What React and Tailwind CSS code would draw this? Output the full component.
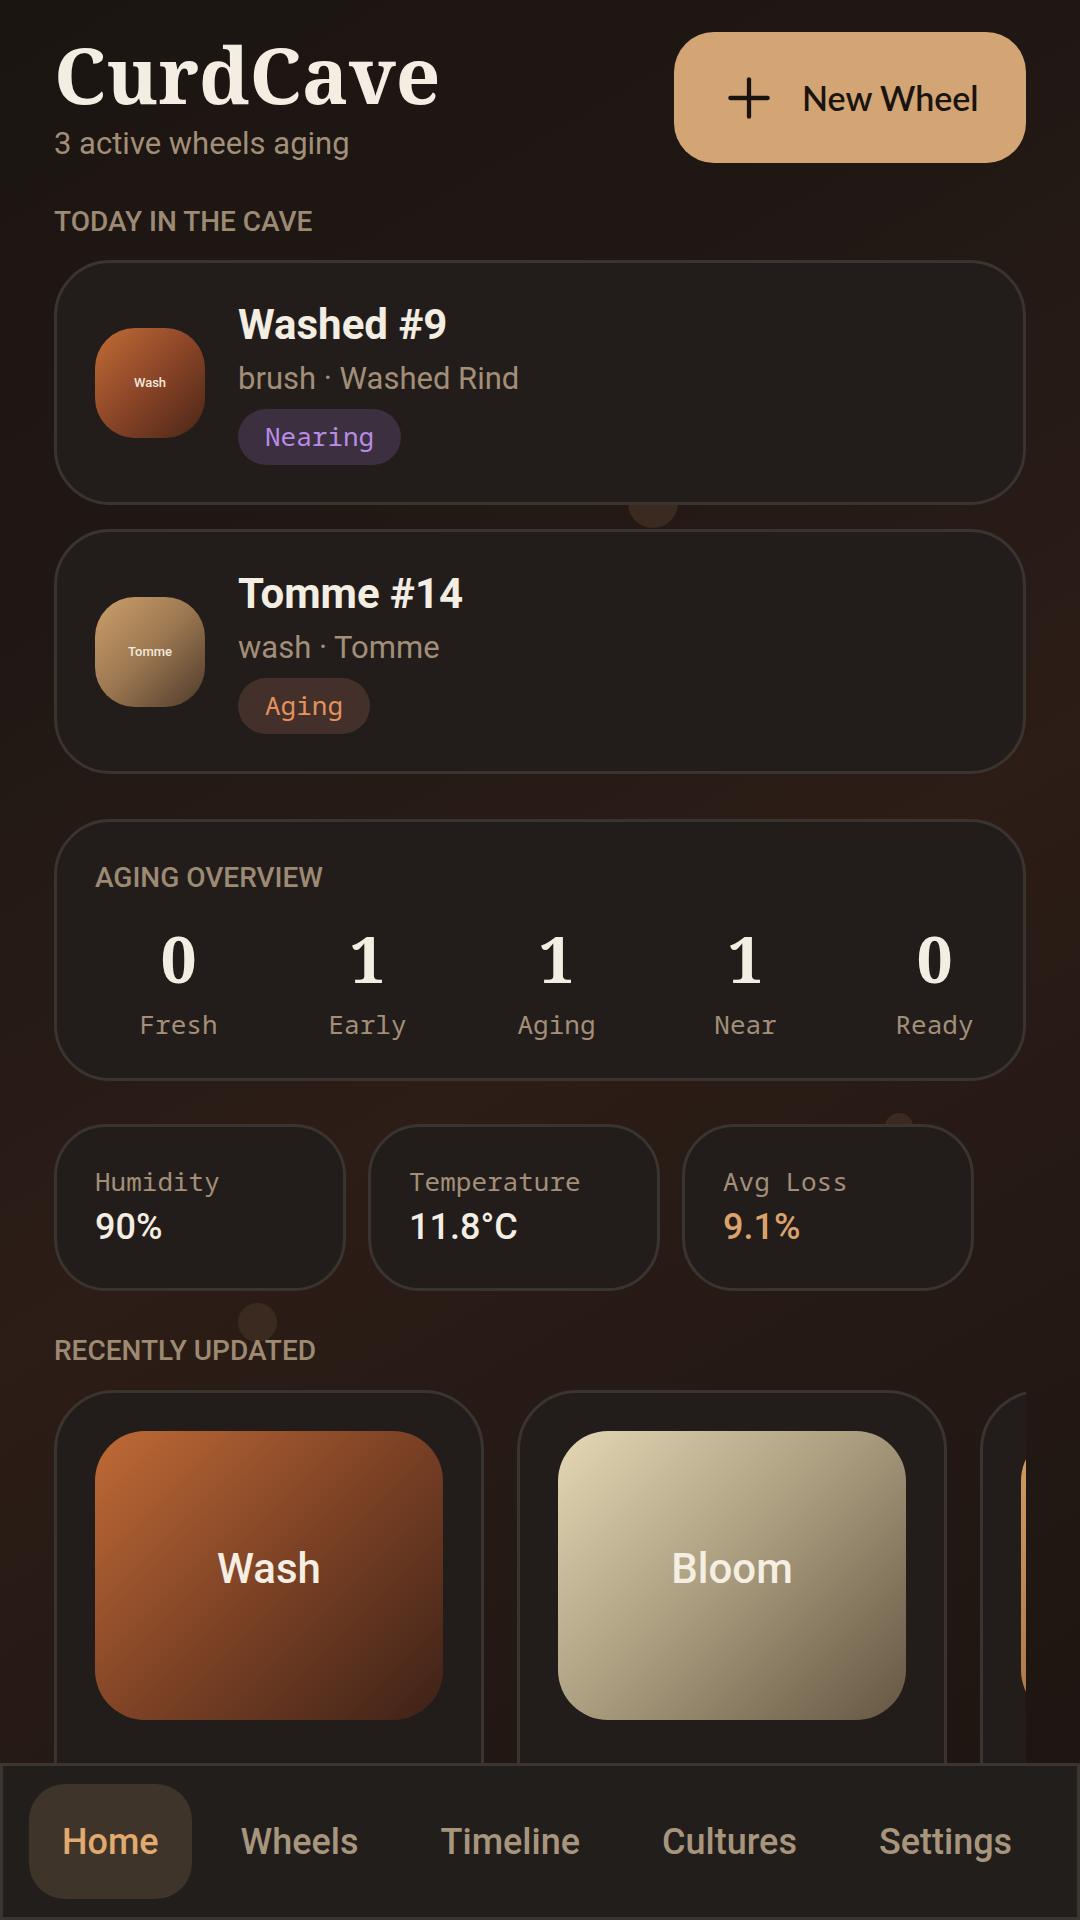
import { Plus } from "lucide-react";

const todayWheels = [
  {
    name: "Washed #9",
    meta: "brush · Washed Rind",
    tag: "Wash",
    status: "Nearing",
    swatch: "bg-[linear-gradient(135deg,#c26c37_0%,#8a4527_50%,#4a2517_100%)]",
    badge: "bg-[#3b2f40] text-[#b98be4]",
  },
  {
    name: "Tomme #14",
    meta: "wash · Tomme",
    tag: "Tomme",
    status: "Aging",
    swatch: "bg-[linear-gradient(135deg,#cda06c_0%,#9a7650_50%,#4d3a2a_100%)]",
    badge: "bg-[#43302a] text-[#e4925a]",
  },
];

const overview = [
  { label: "Fresh", count: 0 },
  { label: "Early", count: 1 },
  { label: "Aging", count: 1 },
  { label: "Near", count: 1 },
  { label: "Ready", count: 0 },
];

const stats = [
  { label: "Humidity", value: "90%", accent: false },
  { label: "Temperature", value: "11.8°C", accent: false },
  { label: "Avg Loss", value: "9.1%", accent: true },
];

const recent = [
  {
    tag: "Wash",
    name: "Washed #9",
    meta: "Day 41 · brush",
    swatch: "bg-[linear-gradient(135deg,#c06a36_0%,#7d4225_50%,#3d2117_100%)]",
  },
  {
    tag: "Bloom",
    name: "Bloomy #3",
    meta: "Day 12 · flip",
    swatch: "bg-[linear-gradient(135deg,#e4d8b6_0%,#a89a7c_50%,#645642_100%)]",
  },
  {
    tag: "Tomme",
    name: "Tomme #14",
    meta: "Day 63 · wash",
    swatch: "bg-[linear-gradient(135deg,#d29c63_0%,#a87446_50%,#5e4029_100%)]",
  },
];

const navItems = ["Home", "Wheels", "Timeline", "Cultures", "Settings"];

const SectionLabel = ({ children }) => (
  <h2 className="text-[28px] leading-[32px] font-medium uppercase text-[#9d8a73]">
    {children}
  </h2>
);

const App = () => {
  return (
    <div className="relative min-h-screen overflow-hidden bg-[linear-gradient(150deg,#1b1512_0%,#1f1714_22%,#2c1d16_50%,#231813_72%,#1a1411_100%)] font-['Roboto',sans-serif] text-[#f3ede2]">
      {/* spores drifting behind the cards */}
      <div className="absolute left-[628px] top-[478px] h-[50px] w-[50px] rounded-full bg-[#3b2a1f]"></div>
      <div className="absolute left-[885px] top-[1113px] h-[28px] w-[28px] rounded-full bg-[#3b2a1f]"></div>
      <div className="absolute left-[238px] top-[1303px] h-[39px] w-[39px] rounded-full bg-[#3b2a1f]"></div>

      <div className="relative px-[54px] pt-[32px] pb-[200px]">
        <header className="flex items-start justify-between">
          <div className="pt-[3px]">
            <h1 className="font-['Noto_Serif','DejaVu_Serif',serif] text-[78px] leading-[78px] font-bold text-[#f3ede2]">
              CurdCave
            </h1>
            <p className="mt-[13px] text-[31px] leading-[36px] text-[#a38f78]">
              3 active wheels aging
            </p>
          </div>
          <button className="flex h-[131px] w-[352px] items-center gap-[21px] rounded-[40px] bg-[#d3a474] pl-[43px] font-['Lato',sans-serif] text-[34px] font-semibold text-[#1a1410]">
            <Plus size={64} strokeWidth={1.6} />
            New Wheel
          </button>
        </header>

        <div className="mt-[43px]">
          <SectionLabel>Today in the cave</SectionLabel>
        </div>

        <div className="mt-[22px] flex flex-col gap-[24px]">
          {todayWheels.map((w) => (
            <div
              key={w.name}
              className="flex h-[245px] items-center gap-[33px] rounded-[56px] border-[3px] border-[#3a3430] bg-[#221d1b] px-[38px]"
            >
              <div
                className={`flex h-[110px] w-[110px] shrink-0 items-center justify-center rounded-[40px] ${w.swatch}`}
              >
                <span className="text-[13px] font-medium text-[#f3e9dc]">{w.tag}</span>
              </div>
              <div className="flex flex-col items-start">
                <div className="text-[42px] leading-[48px] font-bold text-[#f3ede2]">{w.name}</div>
                <div className="mt-[12px] text-[31px] leading-[36px] text-[#a38f78]">{w.meta}</div>
                <span
                  className={`mt-[12px] flex h-[56px] items-center rounded-full px-[27px] font-['Noto_Sans_Mono','DejaVu_Sans_Mono',monospace] text-[26px] ${w.badge}`}
                >
                  {w.status}
                </span>
              </div>
            </div>
          ))}
        </div>

        <div className="mt-[45px] h-[262px] rounded-[56px] border-[3px] border-[#3a3430] bg-[#221d1b] px-[38px] pt-[40px]">
          <SectionLabel>Aging overview</SectionLabel>
          <div className="ml-[-11px] mt-[33px] grid w-[945px] grid-cols-5">
            {overview.map((o) => (
              <div key={o.label} className="flex flex-col items-center">
                <span className="font-['Noto_Serif','DejaVu_Serif',serif] text-[64px] leading-[64px] font-bold text-[#f3ede2]">
                  {o.count}
                </span>
                <span className="mt-[17px] font-['Noto_Sans_Mono','DejaVu_Sans_Mono',monospace] text-[26px] leading-[32px] text-[#a38f78]">
                  {o.label}
                </span>
              </div>
            ))}
          </div>
        </div>

        <div className="mt-[43px] flex gap-[22px]">
          {stats.map((s) => (
            <div
              key={s.label}
              className="h-[167px] w-[292px] shrink-0 rounded-[52px] border-[3px] border-[#3a3430] bg-[#221d1b] px-[38px] pt-[38px]"
            >
              <div className="font-['Noto_Sans_Mono','DejaVu_Sans_Mono',monospace] text-[26px] leading-[32px] text-[#a38f78]">
                {s.label}
              </div>
              <div
                className={`mt-[8px] text-[36px] leading-[44px] font-medium ${
                  s.accent ? "text-[#dba36c]" : "text-[#f3ede2]"
                }`}
              >
                {s.value}
              </div>
            </div>
          ))}
        </div>

        <div className="mt-[44px]">
          <SectionLabel>Recently updated</SectionLabel>
        </div>

        <div className="mt-[23px] overflow-hidden">
          <div className="flex gap-[33px]">
            {recent.map((r) => (
              <div
                key={r.tag}
                className="w-[430px] shrink-0 rounded-[60px] border-[3px] border-[#3a3430] bg-[#221d1b] px-[38px] pt-[38px] pb-[40px]"
              >
                <div
                  className={`flex h-[289px] items-center justify-center rounded-[50px] pb-[14px] ${r.swatch}`}
                >
                  <span className="text-[42px] font-medium text-[#f5eee2]">{r.tag}</span>
                </div>
                <div className="mt-[37px] text-[42px] leading-[48px] font-bold text-[#f3ede2]">
                  {r.name}
                </div>
                <div className="mt-[6px] text-[28px] leading-[34px] text-[#a38f78]">{r.meta}</div>
              </div>
            ))}
          </div>
        </div>
      </div>

      <nav className="fixed bottom-0 left-0 right-0 flex h-[157px] items-center justify-start gap-[16px] border-[3px] border-[#3b3530] bg-[#221e1b] pl-[26px]">
        {navItems.map((item, i) => (
          <div
            key={item}
            className={`flex h-[115px] items-center rounded-[36px] px-[33px] text-[36px] font-medium ${
              i === 0 ? "bg-[#3f3429] text-[#e2aa6f]" : "text-[#a8957e]"
            }`}
          >
            {item}
          </div>
        ))}
      </nav>
    </div>
  );
};

export default App;
